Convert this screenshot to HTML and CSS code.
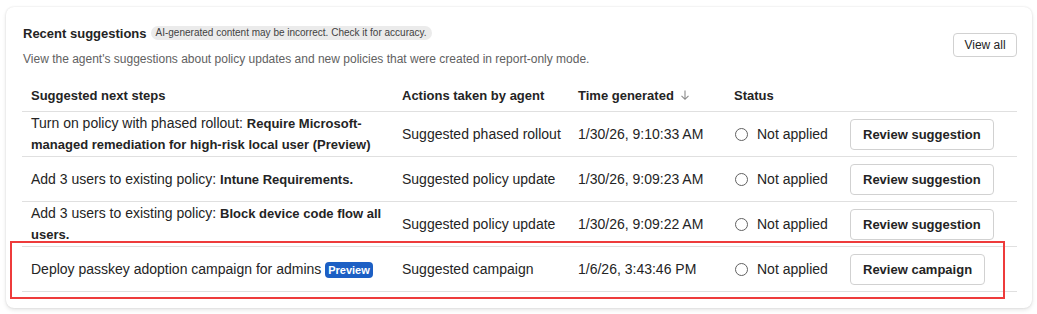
FILE: index.html
```html
<!DOCTYPE html>
<html>
    <head>
        <title>Recent suggestions</title>
        <link rel="stylesheet" href="styles.css">
    </head>
    <body>
        <div class="card">
            <div class="card-head">
                <div class="head-text">
                    <div class="title-row">
                        <span class="title">Recent suggestions</span>
                        <span class="ai-note">AI-generated content may be incorrect. Check it for accuracy.</span>
                    </div>
                    <div class="subtitle">View the agent's suggestions about policy updates and new policies that were created in report-only mode.</div>
                </div>
                <button class="btn btn-small">View all</button>
            </div>

            <table class="grid">
                <colgroup>
                    <col class="c-step">
                    <col class="c-action">
                    <col class="c-time">
                    <col class="c-status">
                    <col>
                </colgroup>
                <thead>
                    <tr>
                        <th>Suggested next steps</th>
                        <th>Actions taken by agent</th>
                        <th>Time generated
                            <svg class="sort" width="12" height="12" viewBox="0 0 12 12"><path d="M6 1.5v8.5M2.5 6.8L6 10.3l3.5-3.5" fill="none" stroke="#8a8a8a" stroke-width="1.1"/></svg>
                        </th>
                        <th>Status</th>
                        <th></th>
                    </tr>
                </thead>
                <tbody>
                    <tr>
                        <td>Turn on policy with phased rollout: <b>Require Microsoft-managed remediation for high-risk local user (Preview)</b></td>
                        <td>Suggested phased rollout</td>
                        <td>1/30/26, 9:10:33 AM</td>
                        <td><span class="status"><span class="radio"></span>Not applied</span></td>
                        <td><button class="btn">Review suggestion</button></td>
                    </tr>
                    <tr>
                        <td>Add 3 users to existing policy: <b>Intune Requirements.</b></td>
                        <td>Suggested policy update</td>
                        <td>1/30/26, 9:09:23 AM</td>
                        <td><span class="status"><span class="radio"></span>Not applied</span></td>
                        <td><button class="btn">Review suggestion</button></td>
                    </tr>
                    <tr>
                        <td>Add 3 users to existing policy: <b>Block device code flow all users.</b></td>
                        <td>Suggested policy update</td>
                        <td>1/30/26, 9:09:22 AM</td>
                        <td><span class="status"><span class="radio"></span>Not applied</span></td>
                        <td><button class="btn">Review suggestion</button></td>
                    </tr>
                    <tr>
                        <td>Deploy passkey adoption campaign for admins <span class="preview">Preview</span></td>
                        <td>Suggested campaign</td>
                        <td>1/6/26, 3:43:46 PM</td>
                        <td><span class="status"><span class="radio"></span>Not applied</span></td>
                        <td><button class="btn">Review campaign</button></td>
                    </tr>
                </tbody>
            </table>

            <div class="highlight"></div>
        </div>
    </body>
</html>
```

FILE: styles.css
```css
body{
    margin: 0;
    background: #ffffff;
    font-family: "Segoe UI", "Liberation Sans", Arial, sans-serif;
    color: #242424;
}
.card{
    position: relative;
    margin: 7px 5px 7px 6px;
    padding: 16px 15px 16px 16px;
    background: #ffffff;
    border-radius: 8px;
    box-shadow: 0 0 2px rgba(0, 0, 0, 0.12), 0 2px 4px rgba(0, 0, 0, 0.1);
}
.card-head{
    display: flex;
    align-items: center;
    justify-content: space-between;
}
.title-row{
    display: flex;
    align-items: center;
    gap: 4px;
    height: 20px;
    padding-left: 1px;
}
.title{
    font-size: 13px;
    font-weight: 700;
}
.ai-note{
    font-size: 10px;
    color: #424242;
    background: #ebebeb;
    border-radius: 7px;
    padding: 0 5px;
    line-height: 14px;
}
.subtitle{
    margin-top: 8px;
    padding-left: 1px;
    font-size: 12px;
    line-height: 16px;
    color: #616161;
}
.btn{
    font-family: inherit;
    font-size: 13px;
    font-weight: 700;
    color: #242424;
    background: #ffffff;
    border: 1px solid #d1d1d1;
    border-radius: 4px;
    height: 31px;
    padding: 0 12px;
}
.btn-small{
    font-size: 12px;
    font-weight: 400;
    height: 24px;
    width: 64px;
    padding: 0;
}
.grid{
    width: 100%;
    margin-top: 14px;
    border-collapse: collapse;
    table-layout: fixed;
    font-size: 14px;
}
.grid th{
    text-align: left;
    font-size: 13px;
    font-weight: 700;
    height: 29px;
    padding: 0 8px 1px 9px;
    border-bottom: 1px solid #e0e0e0;
    white-space: nowrap;
}
.grid td{
    height: 44px;
    padding: 0 8px 0 9px;
    line-height: 20px;
    border-bottom: 1px solid #e0e0e0;
    vertical-align: middle;
}
.grid td b{
    font-size: 13px;
}
.c-step{ width: 371px; }
.c-action{ width: 176px; }
.c-time{ width: 156px; }
.c-status{ width: 116px; }
.sort{
    vertical-align: -1px;
    margin-left: 2px;
}
.status{
    display: flex;
    align-items: center;
    gap: 9px;
    white-space: nowrap;
}
.radio{
    width: 13px;
    height: 13px;
    box-sizing: border-box;
    border: 1px solid #616161;
    border-radius: 50%;
    margin-left: 1px;
}
.preview{
    display: inline-block;
    background: #1c5fc4;
    color: #ffffff;
    font-size: 11px;
    font-weight: 700;
    line-height: 16px;
    padding: 0 3px;
    border-radius: 4px;
}
.highlight{
    position: absolute;
    left: 4px;
    top: 234px;
    width: 995px;
    height: 58px;
    box-sizing: border-box;
    border: 2px solid #ee3b3b;
}
```
